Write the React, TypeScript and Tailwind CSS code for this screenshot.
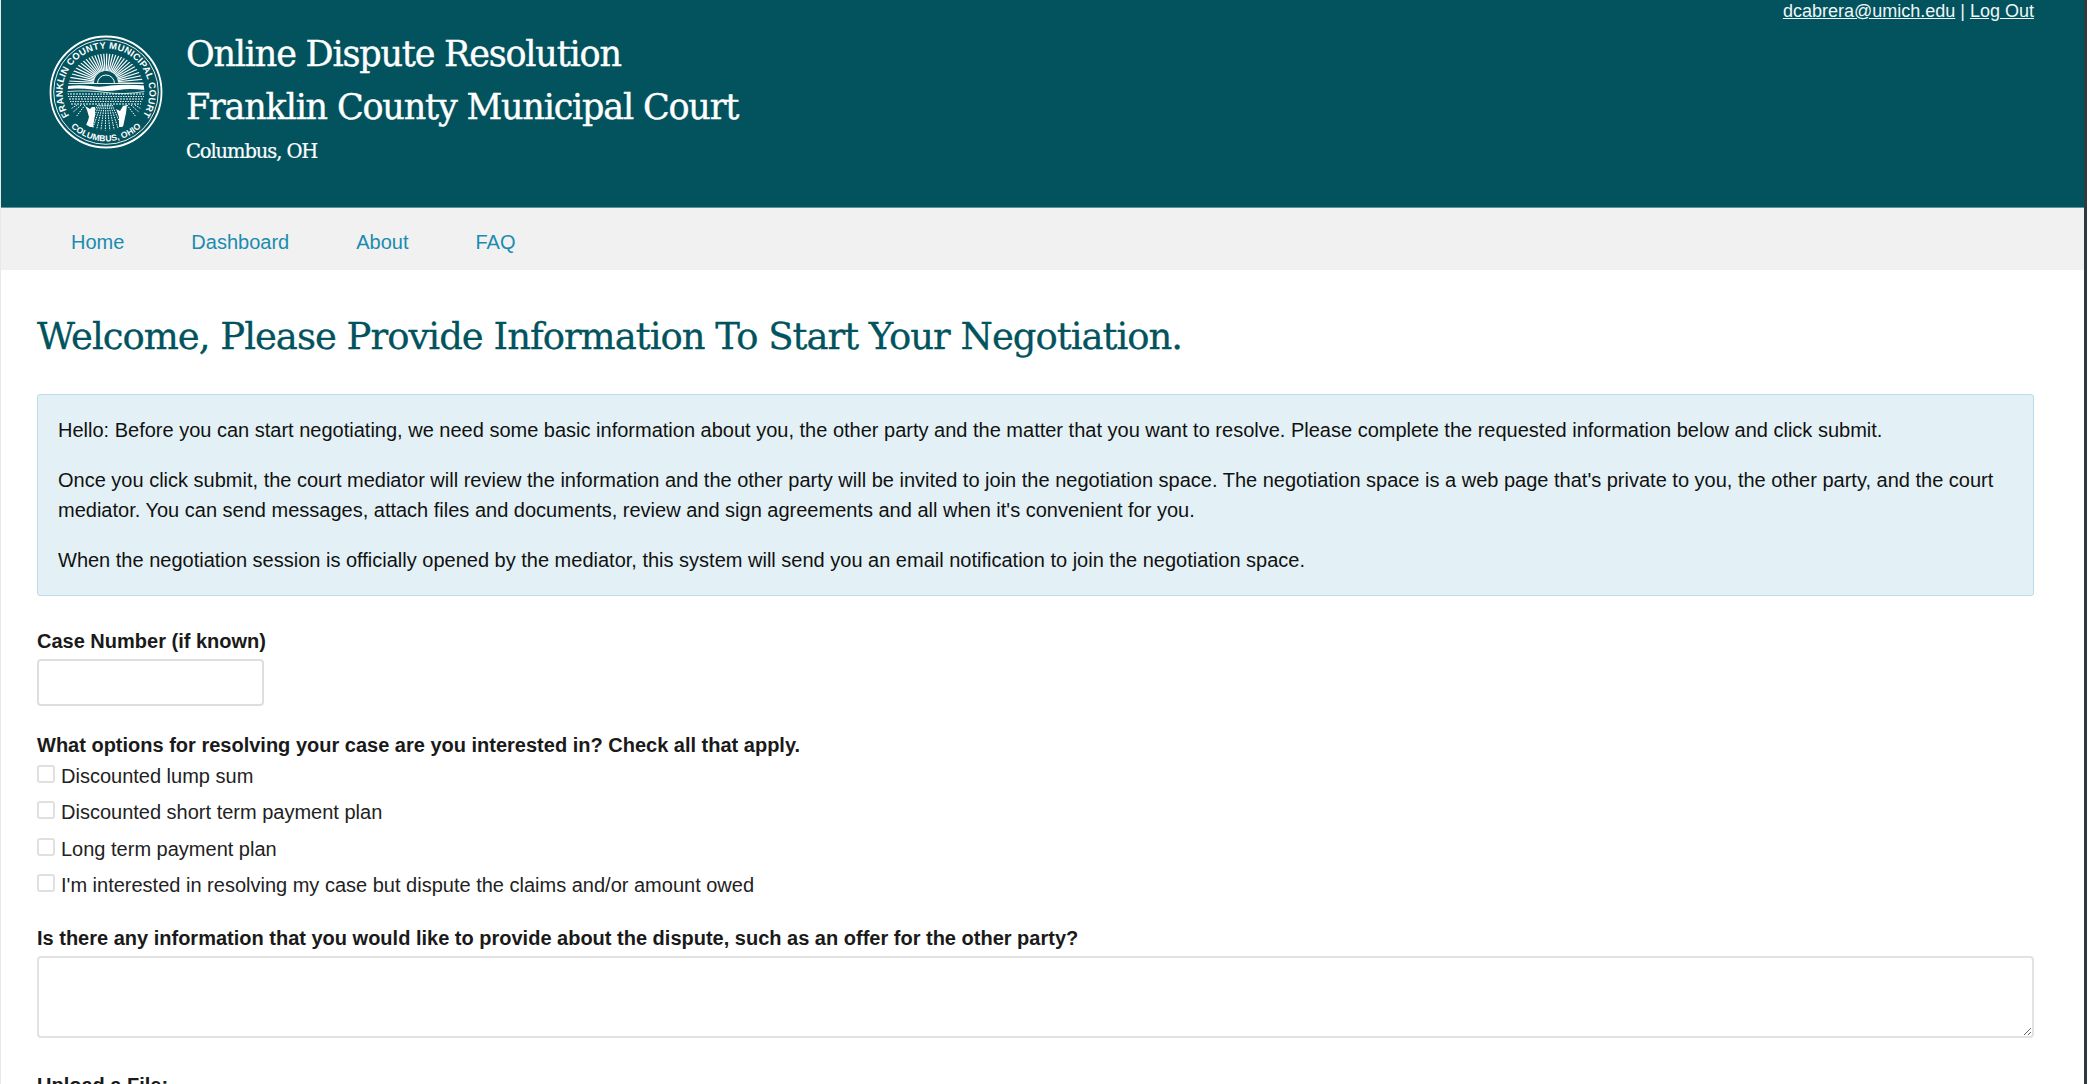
function Seal() {
  const rays = Array.from({ length: 31 }, (_, i) => -177 + i * 5.9);
  const rows = [59, 61.5, 64, 66.5, 69];
  const field = [-18, -14.5, -11, -7.5, -4, -0.5, 3, 6.5, 10, 13.5];
  return (
    <svg viewBox="0 0 114 114" className="w-[114px] h-[114px] shrink-0">
      <defs>
        <path id="sealTop" d="M 24.5 86 A 43.5 43.5 0 1 1 89.5 86" fill="none" />
        <path id="sealBottom" d="M 20 90 A 50 50 0 0 0 94 90" fill="none" />
        <clipPath id="sealInner">
          <circle cx="57" cy="57" r="38.5" />
        </clipPath>
      </defs>
      <circle cx="57" cy="57" r="55.5" fill="none" stroke="#fff" strokeWidth="1.8" />
      <circle cx="57" cy="57" r="52.3" fill="none" stroke="#fff" strokeWidth="0.9" />
      <text fill="#fff" fontSize="9.4" fontWeight="700" fontFamily="Liberation Sans, sans-serif" letterSpacing="0.2">
        <textPath href="#sealTop" startOffset="50%" textAnchor="middle">FRANKLIN COUNTY MUNICIPAL COURT</textPath>
      </text>
      <text fill="#fff" fontSize="8.6" fontWeight="700" fontFamily="Liberation Sans, sans-serif" letterSpacing="0.1">
        <textPath href="#sealBottom" startOffset="50%" textAnchor="middle">COLUMBUS, OHIO</textPath>
      </text>
      <g clipPath="url(#sealInner)">
        {rays.map((a) => (
          <line
            key={a}
            x1={57 + 12 * Math.cos((a * Math.PI) / 180)}
            y1={48 + 12 * Math.sin((a * Math.PI) / 180)}
            x2={57 + 38 * Math.cos((a * Math.PI) / 180)}
            y2={48 + 38 * Math.sin((a * Math.PI) / 180)}
            stroke="#fff"
            strokeWidth="1.2"
          />
        ))}
        <path d="M 48.5 48.5 A 8.5 8.5 0 0 1 65.5 48.5" fill="none" stroke="#fff" strokeWidth="1" />
        <path d="M 18 48.5 L 96 48.5" stroke="#fff" strokeWidth="0.9" />
        <path d="M 18 51 Q 30 49.5 42 51 Q 52 52.5 62 50.5 Q 78 49 96 50.5 L 96 55 Q 80 53 70 55 Q 56 57 44 54.5 Q 30 53 18 54 Z" fill="#fff" />
        <path d="M 18 56.5 Q 40 55 57 57.5 T 96 56.5" fill="none" stroke="#fff" strokeWidth="0.8" />
        {rows.map((y, r) => (
          <g key={y} stroke="#fff" strokeWidth="1" strokeDasharray={r % 2 ? "1.4 1.1" : "2 1"}>
            <path d={`M ${18 + r} ${y} L ${96 - r} ${y}`} />
          </g>
        ))}
        <g stroke="#fff" strokeWidth="1" strokeDasharray="1.5 1" fill="none">
          {field.map((d) => (
            <path key={d} d={`M ${57 + d * 0.45} 70 L ${57 + d * 1.3} 96`} />
          ))}
          <path d="M 36 70 L 24 86" />
          <path d="M 32 70 L 21 80" />
          <path d="M 28 70 L 20 75" />
          <path d="M 78 70 L 90 86" />
          <path d="M 82 70 L 93 80" />
          <path d="M 86 70 L 94 75" />
        </g>
        <path d="M 37 92 L 40 82 L 38 75 L 36 71 L 41 74 L 43 72 L 46 72 L 46 80 L 44 92 Z" fill="#fff" />
        <path d="M 70 92 L 70 82 L 67 74 L 71 76 L 74 71 L 78 70 L 77 78 L 74 92 Z" fill="#fff" />
      </g>
    </svg>
  );
}

const options = [
  "Discounted lump sum",
  "Discounted short term payment plan",
  "Long term payment plan",
  "I'm interested in resolving my case but dispute the claims and/or amount owed",
];

export default function App() {
  return (
    <div className="w-full h-[1084px] overflow-hidden bg-white font-['Liberation_Sans',Arial,sans-serif] text-[#1a1a1a]">
      <div className="w-[2087px] h-full border-l border-r-[3px] border-l-[#e8e8e8] border-r-[#2c3a42] overflow-hidden">
        <header className="h-[208px] bg-[#02535e] border-b border-[#5f929a] text-white relative flex pl-[48px] pt-[35px]">
          <Seal />
          <div className="ml-[23px] -mt-[7px] font-['DejaVu_Serif',serif] [-webkit-text-stroke:0.4px_white]">
            <h1 className="text-[35px] leading-[53px] tracking-[-1.2px]">Online Dispute Resolution</h1>
            <h1 className="text-[35px] leading-[53px] tracking-[-1.2px]">Franklin County Municipal Court</h1>
            <p className="text-[19.5px] leading-[26px] mt-[5px] tracking-[-1.1px] [-webkit-text-stroke:0.2px_white]">Columbus, OH</p>
          </div>
          <div className="absolute right-[50px] top-0 text-[18px] leading-[22px] text-[#f0f6f7] font-['Liberation_Sans',sans-serif]">
            <a href="#" className="underline">dcabrera@umich.edu</a> | <a href="#" className="underline">Log Out</a>
          </div>
        </header>

        <nav className="h-[62px] bg-[#f1f1f1] flex items-center pl-[70px] pt-[5px] gap-[67px] text-[20px] text-[#1a8cb0]">
          <a href="#">Home</a>
          <a href="#">Dashboard</a>
          <a href="#">About</a>
          <a href="#">FAQ</a>
        </nav>

        <main className="pl-[36px] pr-[50px] pt-[41px]">
          <h2 className="text-[37px] leading-[52px] text-[#02535e] font-['DejaVu_Serif',serif] tracking-[-1px] [-webkit-text-stroke:0.3px_#02535e]">
            Welcome, Please Provide Information To Start Your Negotiation.
          </h2>

          <div className="mt-[31px] h-[202px] bg-[#e3f1f6] border border-[#bcdce8] rounded-[3px] px-[20px] pt-[20px] text-[20px] leading-[30px] text-[#111]">
            <p>
              Hello: Before you can start negotiating, we need some basic information about you, the other party and the matter that you want to resolve. Please complete the requested information below and click submit.
            </p>
            <p className="mt-[20px]">
              Once you click submit, the court mediator will review the information and the other party will be invited to join the negotiation space. The negotiation space is a web page that's private to you, the other party, and the court mediator. You can send messages, attach files and documents, review and sign agreements and all when it's convenient for you.
            </p>
            <p className="mt-[20px]">
              When the negotiation session is officially opened by the mediator, this system will send you an email notification to join the negotiation space.
            </p>
          </div>

          <label className="block mt-[30px] text-[20px] leading-[30px] font-bold">Case Number (if known)</label>
          <input type="text" className="block mt-[3px] w-[227px] h-[47px] border-2 border-[#dedede] rounded-[4px] bg-white" />

          <p className="mt-[24px] text-[20px] leading-[30px] font-bold">
            What options for resolving your case are you interested in? Check all that apply.
          </p>
          <div>
            {options.map((o) => (
              <label key={o} className="flex items-start h-[36.3px] text-[20px] leading-[30px] text-[#222]">
                <input type="checkbox" className="appearance-none mt-[5px] w-[18px] h-[18px] border-2 border-[#e0e0e0] rounded-[3px] bg-white" />
                <span className="ml-[6px] mt-[1px]">{o}</span>
              </label>
            ))}
          </div>

          <label className="block mt-[18px] text-[20px] leading-[30px] font-bold">
            Is there any information that you would like to provide about the dispute, such as an offer for the other party?
          </label>
          <textarea className="block mt-[3px] w-full h-[82px] border-2 border-[#e2e2e2] rounded-[4px] bg-white" />

          <label className="block mt-[32px] text-[20px] leading-[30px] font-bold">Upload a File:</label>
        </main>
      </div>
    </div>
  );
}
